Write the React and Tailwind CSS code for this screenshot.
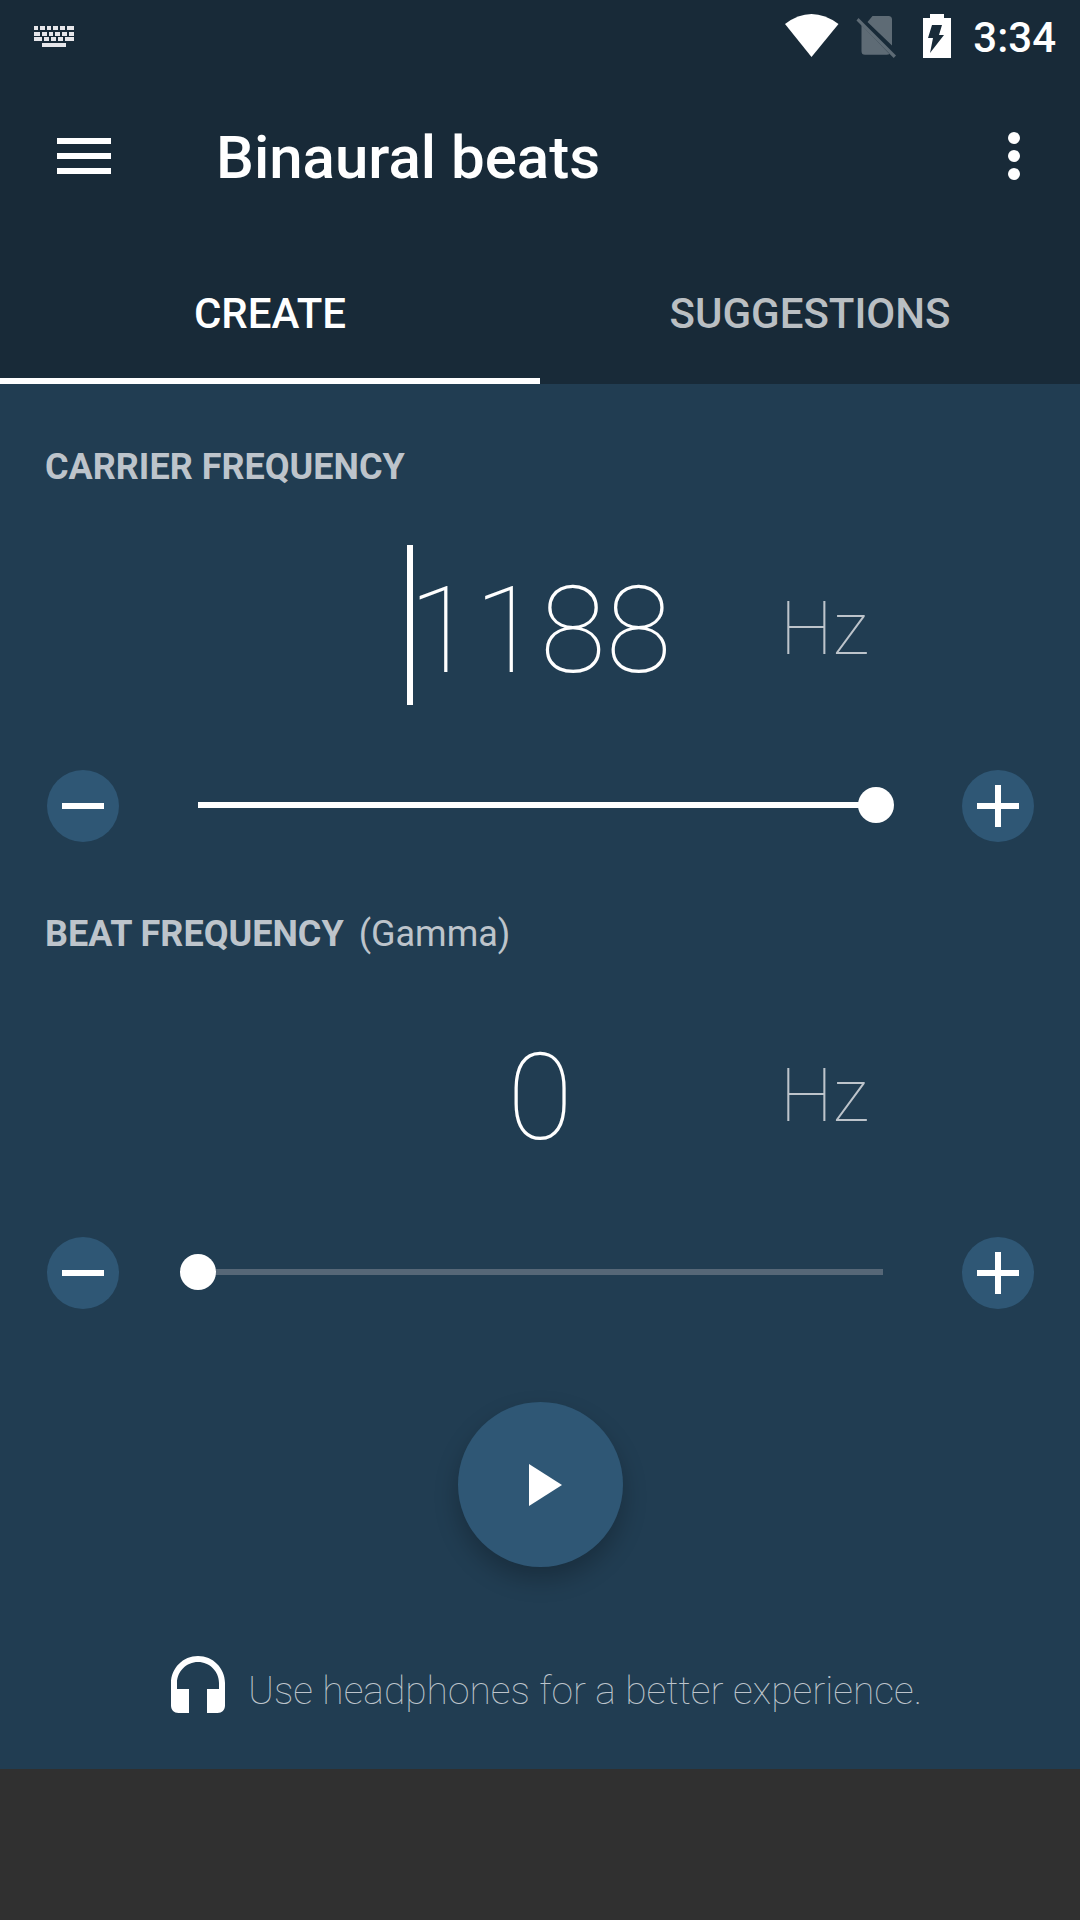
import { useState } from "react";

function KeyboardIcon() {
  const rows = [
    [26, [[34, 4], [40, 5], [47, 4], [53, 5], [60, 5], [67, 7]]],
    [32, [[34, 6], [42, 5], [49, 4], [55, 5], [62, 5], [69, 5]]],
    [37, [[34, 8], [44, 5], [51, 5], [58, 5], [65, 9]]],
    [43, [[42, 24]]],
  ];
  return (
    <svg className="h-6 w-10" viewBox="34 24 40 24" fill="#e6e6ea" aria-hidden="true">
      {rows.map(([y, keys]) => keys.map(([x, w]) => <rect key={`${x}-${y}`} x={x} y={y} width={w} height="4" />))}
    </svg>
  );
}

function StatusBar() {
  return (
    <div className="flex h-[72px] items-center justify-between pr-[24px] pl-[34px]">
      <KeyboardIcon />
      <div className="flex items-center">
        <svg className="mr-[17px] h-[48px] w-[54px]" viewBox="785 12 54 48" fill="#fff" aria-hidden="true">
          <path d="M785 24Q798 14 811.500 14T838.500 24L811.500 57Z" />
        </svg>
        <svg className="mr-[26px] h-[48px] w-[40px]" viewBox="856 12 40 48" fill="#5e6b75" aria-hidden="true">
          <path d="M867.500 22l5-6h16q3.500 0 3.500 3.500V45.500ZM862 25.500l27.500 28.500q-1 .7-3 .700H865q-3.500 0-3.500-3.500V25Z" />
          <path d="M856.500 20.500l2-2.500 37.500 37.500-2.300 2.500Z" />
        </svg>
        <svg className="mr-[21px] h-[48px] w-[30px]" viewBox="922 12 30 48" aria-hidden="true">
          <path fill="#fff" d="M930 14h14v4h7v40h-28V18h7Z" />
          <path fill="#182a38" d="M932 25h10l-3 10h5l-14 18 3-15h-5Z" />
        </svg>
        <time className="pt-1 text-[42px] leading-[48px] font-medium">3:34</time>
      </div>
    </div>
  );
}

function StepButton({ label, plus, onClick }) {
  return (
    <button
      type="button"
      aria-label={label}
      onClick={onClick}
      className="flex size-[72px] shrink-0 items-center justify-center rounded-full bg-[#2f5775]"
    >
      <svg className="size-[42px]" viewBox="0 0 42 42" stroke="#fff" strokeWidth="6" aria-hidden="true">
        <path d={plus ? "M0 21H42M21 0V42" : "M0 21H42"} />
      </svg>
    </button>
  );
}

function FrequencySection({ id, title, note, initial, max, caret }) {
  const [value, setValue] = useState(initial);
  const clamp = (v) => setValue(Math.max(0, Math.min(max, v)));
  const percent = (value / max) * 100;
  return (
    <section className="px-[45px] pt-[62px]">
      <h2 className="flex gap-[15px] text-[36px] leading-[42px] text-[#bdc4cb]">
        <label htmlFor={id} className="font-bold">{title}</label>
        {note && <span className="font-normal">{note}</span>}
      </h2>
      <div className="mt-[57px] flex items-center">
        <div className="flex-1" />
        <div className="relative w-[480px]">
          <input
            id={id}
            type="text"
            inputMode="numeric"
            value={value}
            onChange={(e) => clamp(Number(e.target.value) || 0)}
            className="h-[160px] w-full bg-transparent pt-3 text-center text-[120px] font-thin text-white outline-none"
          />
          {caret && <span className="absolute top-0 left-1/2 -ml-[133px] h-full w-[6px] bg-white" />}
        </div>
        <span className="flex-1 pt-[6px] text-[75px] leading-[88px] font-thin text-[#bdc4cb]">Hz</span>
      </div>
      <div className="mt-[65px] flex items-center pr-px pl-[2px]">
        <StepButton label={`Decrease ${title.toLowerCase()}`} onClick={() => clamp(value - 1)} />
        <input
          type="range"
          aria-label={title}
          min="0"
          max={max}
          value={value}
          onChange={(e) => clamp(Number(e.target.value))}
          style={{ backgroundImage: `linear-gradient(to right, #fff ${percent}%, #566777 ${percent}%)` }}
          className="mx-[61px] mb-[2px] h-[36px] min-w-0 flex-1 appearance-none bg-[length:calc(100%-36px)_6px] bg-center bg-no-repeat outline-none [&::-webkit-slider-thumb]:size-[36px] [&::-webkit-slider-thumb]:appearance-none [&::-webkit-slider-thumb]:rounded-full [&::-webkit-slider-thumb]:bg-white"
        />
        <StepButton plus label={`Increase ${title.toLowerCase()}`} onClick={() => clamp(value + 1)} />
      </div>
    </section>
  );
}

export default function App() {
  return (
    <div className="min-h-screen bg-[#303030] font-['Roboto',sans-serif] text-white">
      <header className="bg-[#182a38]">
        <StatusBar />
        <div className="flex h-[168px] items-center pr-[48px] pl-[57px]">
          <button type="button" aria-label="Open menu">
            <svg className="h-[36px] w-[54px]" viewBox="0 0 54 36" fill="#fff" aria-hidden="true">
              <path d="M0 0h54v6H0ZM0 15h54v6H0ZM0 30h54v6H0Z" />
            </svg>
          </button>
          <h1 className="ml-[105px] flex-1 pt-1 text-[60px] leading-[70px] font-medium">Binaural beats</h1>
          <button type="button" aria-label="More options" className="flex w-[36px] flex-col items-center gap-[6px]">
            <span className="size-[12px] rounded-full bg-white" />
            <span className="size-[12px] rounded-full bg-white" />
            <span className="size-[12px] rounded-full bg-white" />
          </button>
        </div>
        <nav role="tablist" className="grid h-[144px] grid-cols-2 text-[42px] font-medium">
          <button type="button" role="tab" aria-selected="true" className="border-b-6 border-white pt-2">CREATE</button>
          <button type="button" role="tab" aria-selected="false" className="border-b-6 border-transparent pt-2 text-[#babfc3]">SUGGESTIONS</button>
        </nav>
      </header>
      <main className="bg-[#213d52] pb-[50px]">
        <FrequencySection id="carrier" title="CARRIER FREQUENCY" initial={1188} max={1200} caret />
        <div className="h-[9px]" />
        <FrequencySection id="beat" title="BEAT FREQUENCY" note="(Gamma)" initial={0} max={100} />
        <div className="mt-[93px] flex justify-center">
          <button
            type="button"
            aria-label="Play"
            className="flex size-[165px] items-center justify-center rounded-full bg-[#2f5775] pl-[10px] shadow-[0_12px_24px_rgba(0,0,0,0.24)]"
          >
            <svg className="h-[42px] w-[33px]" viewBox="0 0 33 42" fill="#fff" aria-hidden="true">
              <path d="M0 0 33 21 0 42Z" />
            </svg>
          </button>
        </div>
        <p className="mt-[80px] flex items-center justify-center gap-[14px] pl-1 text-[39px] leading-[46px] font-thin text-[#bdc4cb]">
          <svg className="size-[72px]" viewBox="0 0 24 24" fill="#fff" aria-hidden="true">
            <path d="M12 3c-4.970 0-9 4.030-9 9v7.500C3 21 4 22 5.500 22H9v-8H5v-2c0-3.870 3.130-7 7-7s7 3.130 7 7v2h-4v8h3.500c1.500 0 2.500-1 2.500-2.500V12c0-4.970-4.030-9-9-9Z" />
          </svg>
          <span className="pt-4">Use headphones for a better experience.</span>
        </p>
      </main>
    </div>
  );
}
